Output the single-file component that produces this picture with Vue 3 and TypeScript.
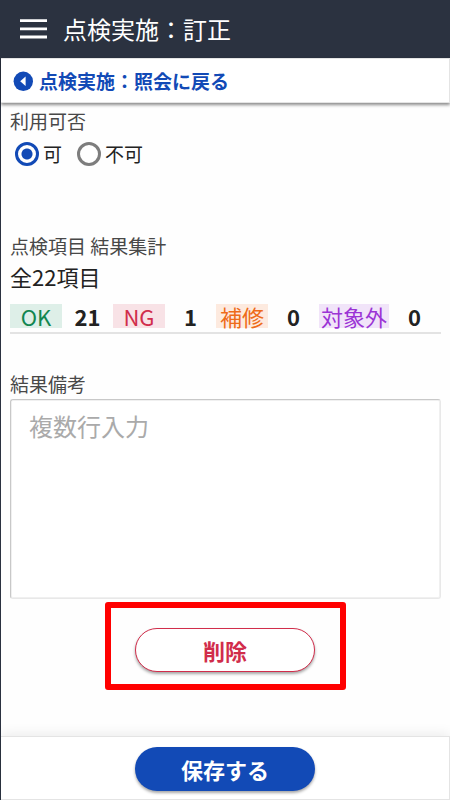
<script setup lang="ts">
import { ref } from 'vue'

interface Summary {
  label: string
  count: number
  tone: string
}

const availability = ref<string>('ok')
const remarks = ref<string>('')
const summary: Summary[] = [
  { label: 'OK', count: 21, tone: 'green' },
  { label: 'NG', count: 1, tone: 'red' },
  { label: '補修', count: 0, tone: 'orange' },
  { label: '対象外', count: 0, tone: 'purple' },
]
</script>

<template>
  <div class="page">
    <header class="topbar">
      <button class="menu" type="button" aria-label="メニュー">
        <svg width="28" height="20" viewBox="0 0 28 20" aria-hidden="true">
          <path d="M0 1.7h27M0 9.8h27M0 18h27" stroke="#fff" stroke-width="2.8" />
        </svg>
      </button>
      <h1>点検実施：訂正</h1>
    </header>

    <nav class="backbar">
      <a href="#">
        <svg width="20" height="20" viewBox="0 0 20 20" aria-hidden="true">
          <circle cx="10.3" cy="10.3" r="9.7" fill="#124ab6" />
          <path d="M12.6 5.4v9.6L7.2 10.2z" fill="#fff" />
        </svg>
        <span>点検実施：照会に戻る</span>
      </a>
    </nav>

    <main class="content">
      <fieldset class="availability">
        <legend class="label">利用可否</legend>
        <div class="radios">
          <label><input v-model="availability" type="radio" name="availability" value="ok" />可</label>
          <label><input v-model="availability" type="radio" name="availability" value="ng" />不可</label>
        </div>
      </fieldset>

      <section class="results">
        <h2 class="label">点検項目 結果集計</h2>
        <p class="total">全22項目</p>
        <ul class="summary">
          <li v-for="item in summary" :key="item.label">
            <span class="badge" :class="item.tone">{{ item.label }}</span>
            <strong>{{ item.count }}</strong>
          </li>
        </ul>
      </section>

      <div class="remarks">
        <label class="label" for="remarks">結果備考</label>
        <textarea id="remarks" v-model="remarks" placeholder="複数行入力"></textarea>
      </div>

      <div class="highlight">
        <button class="pill delete" type="button">削除</button>
      </div>
    </main>

    <footer class="footer">
      <button class="pill save" type="button">保存する</button>
    </footer>
  </div>
</template>

<style>
body {
  background: #fefefe;
}
</style>

<style scoped>
.page {
  box-sizing: border-box;
  display: flex;
  flex-direction: column;
  min-height: 100vh;
  border-left: 1px solid #2b3240;
  font-family: "Noto Sans CJK JP", sans-serif;
  color: #222;
}
h1, h2, p, ul, fieldset, legend {
  margin: 0;
  padding: 0;
  border: 0;
}
.topbar {
  display: flex;
  align-items: center;
  gap: 15px;
  height: 58px;
  margin-left: -1px;
  padding-left: 20px;
  background: #2b3240;
  color: #fff;
}
.menu {
  display: flex;
  margin: 0;
  padding: 0;
  border: 0;
  background: none;
}
h1 {
  font-size: 24px;
  font-weight: 400;
  line-height: 36px;
}
.backbar {
  display: flex;
  align-items: center;
  box-sizing: border-box;
  height: 45px;
  padding-left: 12px;
  border: 1px solid #e4e4e4;
  border-left: 0;
  background: #fff;
  box-shadow: 0 2px 3px rgba(0, 0, 0, 0.45);
}
.backbar a {
  display: flex;
  align-items: center;
  gap: 6px;
  color: #124ab6;
  font-size: 19px;
  font-weight: 700;
  line-height: 28px;
  text-decoration: none;
}
.content {
  display: flex;
  flex-direction: column;
  flex: 1;
  padding: 4px 9px 0;
}
.label {
  display: block;
  color: #484848;
  font-size: 19px;
  font-weight: 400;
  line-height: 28px;
}
.radios {
  display: flex;
  gap: 15px;
  padding: 5px 0 0 5px;
}
.radios label {
  display: flex;
  align-items: center;
  gap: 4px;
  font-size: 19px;
  line-height: 28px;
}
.radios input {
  appearance: none;
  box-sizing: border-box;
  width: 24px;
  height: 24px;
  margin: 0;
  border: 3px solid #7d7d7d;
  border-radius: 50%;
  background: #fff;
}
.radios input:checked {
  border-color: #124ab6;
  background: radial-gradient(circle, #124ab6 0 5px, #fff 6px);
}
.results {
  margin-top: 64px;
}
.total {
  font-size: 22px;
  line-height: 32px;
}
.summary {
  display: flex;
  padding: 12px 0 4px;
  border-bottom: 2px solid #e3e3e3;
  list-style: none;
}
.summary li {
  display: flex;
  font-size: 22px;
  line-height: 24px;
}
.badge {
  min-width: 52px;
  text-align: center;
}
.summary strong {
  width: 51px;
  text-align: center;
}
.green {
  background: #deefe8;
  color: #128650;
}
.red {
  background: #f8e2e6;
  color: #d12d4b;
}
.orange {
  background: #fdeadf;
  color: #ee6b19;
}
.purple {
  min-width: 70px;
  background: #f1e4f9;
  color: #9b34d5;
}
.remarks {
  margin-top: 36px;
}
textarea {
  display: block;
  box-sizing: border-box;
  width: 100%;
  height: 200px;
  margin-top: 1px;
  padding: 8px 18px;
  border: 1px solid #e8e8e8;
  border-top-color: #c8c8c8;
  border-left-color: #c8c8c8;
  border-radius: 3px;
  background: #fff;
  box-shadow: inset 0 0 0 1px #f0f0f0;
  color: #222;
  font-family: inherit;
  font-size: 24px;
  line-height: 36px;
  resize: none;
}
textarea::placeholder {
  color: #aaa;
  opacity: 1;
}
.highlight {
  align-self: center;
  margin-top: 3px;
  padding: 20px 25px 12px 24px;
  border: 6px solid #f00;
  border-radius: 3px;
}
.pill {
  display: block;
  box-sizing: border-box;
  width: 180px;
  height: 44px;
  padding: 0;
  border-radius: 22px;
  font-family: inherit;
  font-size: 22px;
  font-weight: 700;
  line-height: 32px;
  box-shadow: 0 2px 3px rgba(0, 0, 0, 0.35);
}
.delete {
  border: 1px solid #d12d4b;
  background: #fff;
  color: #d12d4b;
}
.save {
  border: 0;
  background: #124ab6;
  color: #fff;
}
.footer {
  display: flex;
  justify-content: center;
  box-sizing: border-box;
  height: 64px;
  padding-top: 10px;
  border: 1px solid #e4e4e4;
  border-left: 0;
  background: #fff;
  box-shadow: 0 -2px 12px rgba(0, 0, 0, 0.08);
}
</style>
